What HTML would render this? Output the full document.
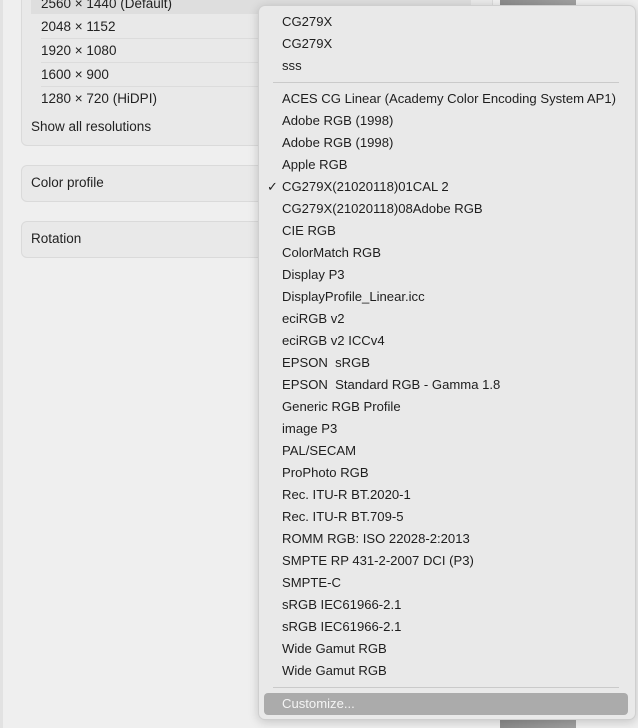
<!DOCTYPE html>
<html><head><style>
body{margin:0;width:638px;height:728px;background:#efefef;font-family:"Liberation Sans",sans-serif;font-size:13.5px;color:#222;position:relative;overflow:hidden}
.a{position:absolute}
.card{position:absolute;left:21px;width:470px;background:#e9e9e9;border:1px solid #dadada;border-radius:6px}
.lt{position:absolute;left:41px;line-height:16px}
.dv{position:absolute;left:41px;width:440px;height:1px;background:#dcdcdc}
.menu{position:absolute;left:258px;top:5px;width:376px;height:713px;background:#e9e9e9;border:1px solid #cfcfcf;border-radius:7px;box-shadow:0 2px 10px rgba(0,0,0,.18);font-size:13.1px}
.it{position:absolute;left:23px;line-height:16px;white-space:nowrap;color:#1e1e1e}
</style></head><body>
<div class="a" style="left:0;top:0;width:3px;height:728px;background:#e2e2e2"></div>
<div class="card" style="top:-10px;height:154px"></div>
<div class="a" style="left:31px;top:0;width:440px;height:14px;background:#dedede"></div>
<div class="lt" style="top:-4px">2560 × 1440 (Default)</div>
<div class="lt" style="top:19px">2048 × 1152</div>
<div class="dv" style="top:38px"></div>
<div class="lt" style="top:43px">1920 × 1080</div>
<div class="dv" style="top:62px"></div>
<div class="lt" style="top:67px">1600 × 900</div>
<div class="dv" style="top:86px"></div>
<div class="lt" style="top:91px">1280 × 720 (HiDPI)</div>
<div class="lt" style="left:31px;top:119px">Show all resolutions</div>
<div class="card" style="top:165px;height:35px"></div>
<div class="lt" style="left:31px;top:175px">Color profile</div>
<div class="card" style="top:221px;height:35px"></div>
<div class="lt" style="left:31px;top:231px">Rotation</div>
<div class="a" style="left:500px;top:0;width:76px;height:8px;background:linear-gradient(90deg,#8c8c8c,#a0a0a0)"></div>
<div class="a" style="left:500px;top:716px;width:76px;height:12px;background:linear-gradient(90deg,#8c8c8c,#a0a0a0)"></div>
<div class="menu">
<div class="it" style="top:8px">CG279X</div>
<div class="it" style="top:30px">CG279X</div>
<div class="it" style="top:52px">sss</div>
<div class="a" style="left:14px;top:76px;width:346px;height:1px;background:#cacaca"></div>
<div class="it" style="top:85px">ACES CG Linear (Academy Color Encoding System AP1)</div>
<div class="it" style="top:107px">Adobe RGB (1998)</div>
<div class="it" style="top:129px">Adobe RGB (1998)</div>
<div class="it" style="top:151px">Apple RGB</div>
<div class="it" style="left:8px;top:173px">✓</div>
<div class="it" style="top:173px">CG279X(21020118)01CAL 2</div>
<div class="it" style="top:195px">CG279X(21020118)08Adobe RGB</div>
<div class="it" style="top:217px">CIE RGB</div>
<div class="it" style="top:239px">ColorMatch RGB</div>
<div class="it" style="top:261px">Display P3</div>
<div class="it" style="top:283px">DisplayProfile_Linear.icc</div>
<div class="it" style="top:305px">eciRGB v2</div>
<div class="it" style="top:327px">eciRGB v2 ICCv4</div>
<div class="it" style="top:349px">EPSON&nbsp; sRGB</div>
<div class="it" style="top:371px">EPSON&nbsp; Standard RGB - Gamma 1.8</div>
<div class="it" style="top:393px">Generic RGB Profile</div>
<div class="it" style="top:415px">image P3</div>
<div class="it" style="top:437px">PAL/SECAM</div>
<div class="it" style="top:459px">ProPhoto RGB</div>
<div class="it" style="top:481px">Rec. ITU-R BT.2020-1</div>
<div class="it" style="top:503px">Rec. ITU-R BT.709-5</div>
<div class="it" style="top:525px">ROMM RGB: ISO 22028-2:2013</div>
<div class="it" style="top:547px">SMPTE RP 431-2-2007 DCI (P3)</div>
<div class="it" style="top:569px">SMPTE-C</div>
<div class="it" style="top:591px">sRGB IEC61966-2.1</div>
<div class="it" style="top:613px">sRGB IEC61966-2.1</div>
<div class="it" style="top:635px">Wide Gamut RGB</div>
<div class="it" style="top:657px">Wide Gamut RGB</div>
<div class="a" style="left:14px;top:681px;width:346px;height:1px;background:#cacaca"></div>
<div class="a" style="left:5px;top:687px;width:364px;height:22px;border-radius:4px;background:#ababab"></div>
<div class="it" style="top:690px;color:#f4f4f4">Customize...</div>
</div>
</body></html>
